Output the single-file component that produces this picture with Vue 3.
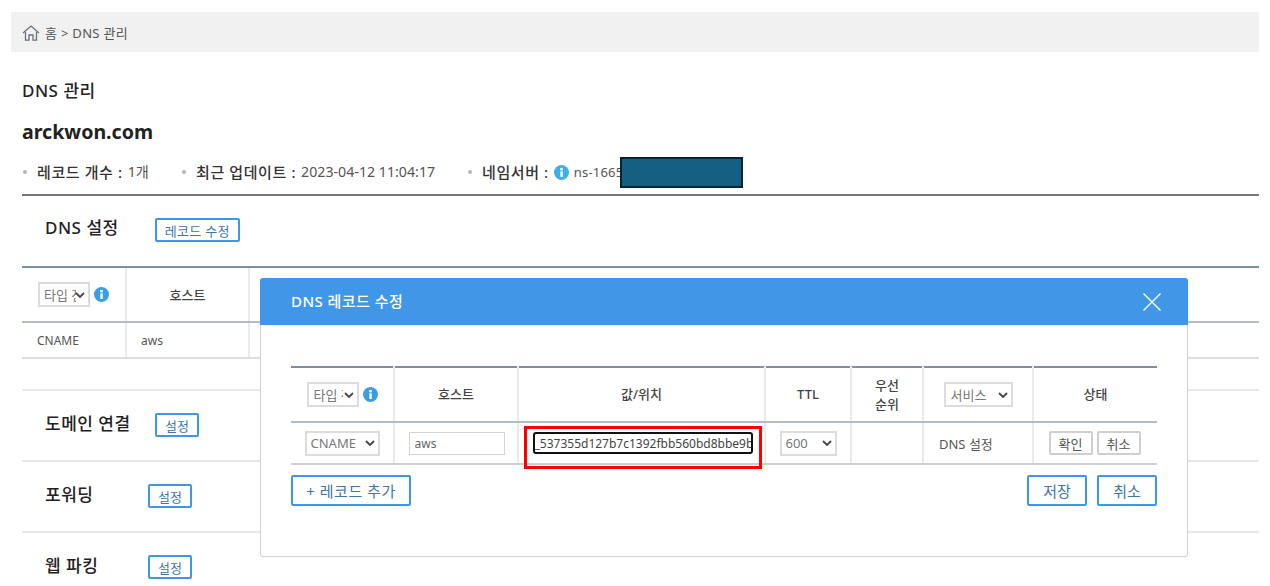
<script setup>
const sections = [
  { name: '도메인 연결', gap: 'wide' },
  { name: '포워딩', gap: 'narrow' },
  { name: '웹 파킹', gap: 'narrow' },
]
const recordValue = '_537355d127b7c1392fbb560bd8bbe9b'
</script>

<template>
  <div class="page">
    <nav class="crumb">
      <svg class="home" viewBox="0 0 18 18" width="18" height="18" fill="none" stroke="#6b7078" stroke-width="1.3">
        <path d="M1 9 L9 2 L17 9" />
        <path d="M3.5 8 V16.2 H7 V11 H11 V16.2 H14.5 V8" />
      </svg>
      <span>홈 &gt; DNS 관리</span>
    </nav>

    <h1 class="title">DNS 관리</h1>
    <h2 class="domain">arckwon.com</h2>

    <ul class="meta">
      <li class="m1"><b>레코드 개수 :</b> 1개</li>
      <li class="m2"><b>최근 업데이트 :</b> 2023-04-12 11:04:17</li>
      <li class="m3">
        <b>네임서버 :</b>
        <svg class="info" viewBox="0 0 16 16" width="15" height="15"><circle cx="8" cy="8" r="8" fill="#3fb0e6" /><rect x="6.8" y="6.8" width="2.6" height="6" fill="#fff" /><circle cx="8" cy="4.4" r="1.5" fill="#fff" /></svg>
        <span class="ns">ns-1665<i class="redact"></i></span>
      </li>
    </ul>

    <section class="settings">
      <div class="settings-head">
        <h3>DNS 설정</h3>
        <button class="btn-sm edit">레코드 수정</button>
      </div>
      <div class="bg-table">
        <div class="bg-row bg-header">
          <div class="bg-c1">
            <select class="sel bg-sel"><option>타입 전체</option></select>
            <svg viewBox="0 0 16 16" width="15" height="15"><circle cx="8" cy="8" r="8" fill="#3b9ee0" /><rect x="6.8" y="6.8" width="2.6" height="6" fill="#fff" /><circle cx="8" cy="4.4" r="1.5" fill="#fff" /></svg>
          </div>
          <div class="bg-c2"><b class="th">호스트</b></div>
        </div>
        <div class="bg-row bg-data">
          <div class="bg-c1 left">CNAME</div>
          <div class="bg-c2 left">aws</div>
        </div>
      </div>
    </section>

    <section v-for="s in sections" :key="s.name" class="link-row" :class="s.gap">
      <h3>{{ s.name }}</h3>
      <button class="btn-sm">설정</button>
    </section>

    <div class="modal">
      <header class="modal-head">
        <span>DNS 레코드 수정</span>
        <svg viewBox="0 0 20 20" width="20" height="20" stroke="#fff" stroke-width="1.4"><path d="M1.5 1.5 L18.5 18.5 M18.5 1.5 L1.5 18.5" /></svg>
      </header>
      <div class="modal-body">
        <table class="rec">
          <colgroup>
            <col class="w1" /><col class="w2" /><col class="w3" /><col class="w4" /><col class="w5" /><col class="w6" /><col class="w7" />
          </colgroup>
          <thead>
            <tr>
              <th>
                <div class="type-h">
                  <select class="sel type-sel"><option>타입 전체</option></select>
                  <svg viewBox="0 0 16 16" width="15" height="15"><circle cx="8" cy="8" r="8" fill="#3b9ee0" /><rect x="6.8" y="6.8" width="2.6" height="6" fill="#fff" /><circle cx="8" cy="4.4" r="1.5" fill="#fff" /></svg>
                </div>
              </th>
              <th>호스트</th>
              <th>값/위치</th>
              <th>TTL</th>
              <th>우선<br />순위</th>
              <th><select class="sel svc-sel"><option>서비스</option></select></th>
              <th>상태</th>
            </tr>
          </thead>
          <tbody>
            <tr>
              <td><select class="sel cname-sel"><option>CNAME</option></select></td>
              <td><input class="inp host" value="aws" /></td>
              <td class="val-cell">
                <input class="inp val" :value="recordValue" />
                <i class="highlight"></i>
              </td>
              <td><select class="sel ttl-sel"><option>600</option></select></td>
              <td></td>
              <td class="svc">DNS 설정</td>
              <td>
                <div class="state">
                  <button class="btn-gray">확인</button>
                  <button class="btn-gray">취소</button>
                </div>
              </td>
            </tr>
          </tbody>
        </table>
        <div class="actions">
          <button class="btn-lg add">+ 레코드 추가</button>
          <div class="actions-right">
            <button class="btn-lg save">저장</button>
            <button class="btn-lg save">취소</button>
          </div>
        </div>
      </div>
    </div>
  </div>
</template>

<style>
html, body { margin: 0; overflow: hidden; background: #fff; }
</style>

<style scoped>
.page {
  position: relative;
  width: 1270px;
  height: 586px;
  overflow: hidden;
  box-sizing: border-box;
  padding: 12px 11px 0;
  background: #fff;
  color: #222;
  font-family: "Noto Sans", "Noto Sans CJK KR", sans-serif;
}
h1, h2, h3, ul { margin: 0; padding: 0; }
.crumb {
  display: flex;
  align-items: center;
  gap: 5px;
  height: 40px;
  padding-left: 11px;
  background: #f1f1f1;
  font-size: 13px;
  letter-spacing: .3px;
  color: #555;
}
.home { margin-top: 2px; }
.title {
  margin: 28px 0 0 11px;
  height: 22px;
  line-height: 22px;
  font-size: 17px;
  letter-spacing: .5px;
  font-weight: 500;
  color: #222;
}
.domain {
  margin: 18px 0 0 11px;
  height: 24px;
  line-height: 24px;
  font-size: 19.6px;
  font-weight: 700;
  color: #222;
}
.meta {
  list-style: none;
  display: flex;
  align-items: flex-start;
  margin: 17px 0 0 12px;
  height: 33px;
  font-size: 14.2px;
  line-height: 22px;
  color: #555;
}
.meta li {
  position: relative;
  box-sizing: border-box;
  display: flex;
  align-items: center;
  gap: 5px;
  padding-left: 14px;
  white-space: nowrap;
}
.meta li::before {
  content: "";
  position: absolute;
  left: 0;
  top: 9px;
  width: 4px;
  height: 4px;
  border-radius: 50%;
  background: #b4b4b4;
}
.meta b { font-weight: 500; color: #333; font-size: 15px; letter-spacing: .6px; }
.m1 { width: 159px; }
.m2 { width: 286px; }
.ns { position: relative; font-size: 13px; letter-spacing: .2px; }
.redact {
  position: absolute;
  left: 46px;
  top: -4px;
  width: 123px;
  height: 31px;
  box-sizing: border-box;
  background: #156082;
  border: 2px solid #042433;
}
.settings {
  margin-left: 11px;
  border-top: 2px solid #777;
}
.settings-head {
  display: flex;
  align-items: center;
  height: 70px;
  padding-left: 23px;
  gap: 36px;
}
.settings-head h3 { margin-bottom: 6px; }
h3 { font-size: 17px; letter-spacing: .5px; line-height: 24px; font-weight: 500; color: #222; }
.btn-sm {
  box-sizing: border-box;
  height: 24px;
  padding: 0;
  border: 2px solid #3f96e8;
  border-radius: 2px;
  background: #fff;
  color: #3a76b0;
  font: 13px "Noto Sans", "Noto Sans CJK KR", sans-serif;
}
.edit { width: 85px; letter-spacing: .3px; margin-top: -2px; }
.bg-table { border-top: 2px solid #7c8fa3; margin-bottom: 30px; }
.bg-row { display: flex; }
.bg-header { height: 53px; border-bottom: 2px solid #b4bcc6; }
.bg-data { height: 34px; border-bottom: 2px solid #dedede; }
.bg-c1, .bg-c2 {
  box-sizing: border-box;
  border-right: 2px solid #eaeaea;
  display: flex;
  align-items: center;
  justify-content: center;
}
.bg-c1 { width: 105px; gap: 4px; }
.bg-c2 { width: 123px; }
.left { justify-content: flex-start; font-size: 12px; color: #555; }
.bg-c1.left { padding-left: 15px; }
.bg-c2.left { padding-left: 14px; }
.th { font-size: 13px; font-weight: 500; color: #444; }
.sel {
  appearance: none;
  box-sizing: border-box;
  height: 25px;
  padding: 0 14px 0 4px;
  border: 2px solid #dcdcdc;
  border-radius: 0;
  background: #fff url("data:image/svg+xml,%3Csvg xmlns='http://www.w3.org/2000/svg' width='10' height='6'%3E%3Cpath d='M1 1l4 4 4-4' fill='none' stroke='%23444' stroke-width='1.8'/%3E%3C/svg%3E") no-repeat right 3px center;
  color: #777;
  font: 13px "Noto Sans", "Noto Sans CJK KR", sans-serif;
  outline: none;
}
.bg-sel { width: 52px; padding-right: 12px; }
.link-row {
  display: flex;
  align-items: flex-start;
  height: 71px;
  margin-left: 11px;
  padding: 21px 0 0 23px;
  border-top: 2px solid #e8e8e8;
  box-sizing: border-box;
}
.link-row .btn-sm { width: 44px; margin-top: 1px; }
.wide h3 { width: 110px; }
.narrow h3 { width: 103px; }
.modal {
  position: absolute;
  left: 260px;
  top: 278px;
  width: 928px;
  height: 279px;
  box-sizing: border-box;
  background: #fff;
  border: 1px solid #d4d4d4;
  border-radius: 3px;
  box-shadow: 0 0 1px rgba(0,0,0,.1);
}
.modal-head {
  display: flex;
  align-items: center;
  justify-content: space-between;
  box-sizing: border-box;
  height: 47px;
  margin: -1px -1px 0;
  padding: 0 26px 0 31px;
  background: #4097e8;
  border-radius: 3px 3px 0 0;
  color: #fff;
  font-size: 15px;
  letter-spacing: .45px;
  font-weight: 500;
}
.modal-head span { margin-bottom: 2px; }
.modal-body { padding: 41px 30px 0; }
.rec {
  width: 866px;
  table-layout: fixed;
  border-collapse: collapse;
  border-top: 2px solid #7c8fa3;
}
.w1 { width: 103px; }
.w2 { width: 124px; }
.w3 { width: 247px; }
.w4 { width: 86px; }
.w5 { width: 72px; }
.w6 { width: 110px; }
.w7 { width: 124px; }
.rec th {
  height: 53px;
  padding: 0;
  border-right: 2px solid #eaeaea;
  border-bottom: 2px solid #b4bcc6;
  font-size: 13px;
  line-height: 19px;
  font-weight: 500;
  color: #444;
  text-align: center;
}
.rec td {
  height: 40px;
  padding: 0;
  border-right: 2px solid #eaeaea;
  border-bottom: 2px solid #cfcfcf;
  text-align: center;
  font-size: 13px;
  color: #555;
}
.rec th:last-child, .rec td:last-child { border-right: 0; }
.rec td.svc { text-align: left; padding-left: 15px; }
.type-h { display: flex; align-items: center; justify-content: center; gap: 4px; }
.type-sel { width: 52px; padding-left: 5px; }
.svc-sel { width: 69px; padding-left: 5px; }
.cname-sel { width: 75px; }
.ttl-sel { width: 57px; }
.inp {
  box-sizing: border-box;
  height: 23px;
  border: 1px solid #d4d4d4;
  background: #fff;
  font: 12px "Noto Sans", "Noto Sans CJK KR", sans-serif;
  color: #666;
  outline: none;
}
.host { width: 96px; padding: 0 5px; margin-left: 1px; }
.val-cell { position: relative; }
.val {
  width: 220px;
  height: 22px;
  margin-left: 2px;
  padding: 0;
  border: 2px solid #111;
  border-radius: 3px;
  color: #444;
}
.highlight {
  position: absolute;
  left: 5px;
  top: 3px;
  width: 238px;
  height: 43px;
  box-sizing: border-box;
  border: 3px solid #f00;
  pointer-events: none;
}
.state { display: flex; justify-content: center; gap: 4px; padding-right: 2px; }
.btn-gray {
  box-sizing: border-box;
  width: 44px;
  height: 24px;
  padding: 0;
  border: 2px solid #cfcfcf;
  border-radius: 2px;
  background: #fff;
  color: #555;
  font: 13px "Noto Sans", "Noto Sans CJK KR", sans-serif;
}
.actions { display: flex; justify-content: space-between; margin-top: 10px; }
.actions-right { display: flex; gap: 10px; }
.btn-lg {
  box-sizing: border-box;
  height: 31px;
  padding: 0;
  border: 2px solid #3f96e8;
  border-radius: 2px;
  background: #fff;
  color: #3a76b0;
  font: 15px "Noto Sans", "Noto Sans CJK KR", sans-serif;
}
.add { width: 120px; letter-spacing: .5px; }
.save { width: 60px; }
</style>
